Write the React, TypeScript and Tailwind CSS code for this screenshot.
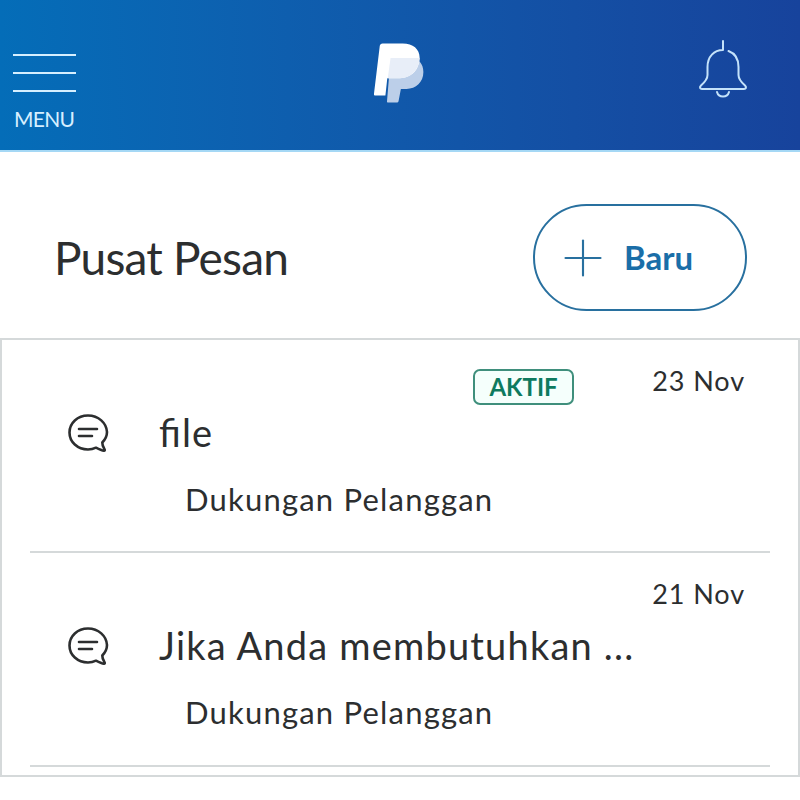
import { Plus } from 'lucide-react';

const sans = "font-['Lato','Noto_Sans',sans-serif]";

function ChatIcon() {
  return (
    <svg width="44" height="44" viewBox="0 0 44 44" fill="none" stroke="#2c2e2f" strokeWidth="2.6" strokeLinecap="round" strokeLinejoin="round">
      <path d="M22 3.5C11.5 3.5 3.5 11 3.500 20.5S11.5 37.5 22 37.5c3 0 5.500-.6 8-1.800 2.500 1.300 5.500 2.800 8 3.100.8 0 1-.7.6-1.300-1.300-2-2.400-4.500-2.300-7 2.900-3 4.700-6.500 4.700-10.500C40.500 11 32.500 3.500 22 3.500Z" />
      <path d="M13 17h18M13 24h13" />
    </svg>
  );
}

function PayPalLogo() {
  return (
    <svg width="52" height="60" viewBox="0 0 54 64">
      <path d="M18 16h20c10 0 15 6 15 15 0 11-8 18-18 18h-6l-2.500 13c-.2 1-1 1.500-2 1.500h-9c-1 0-1.500-.6-1.300-1.500Z" fill="#bccfe9" />
      <path d="M6.500 3c.3-1.500 1.200-2.500 3-2.500H31c11 0 18 6 18 15 0 13-9 22-21 22H14.500l-2 18.500H2c-1.200 0-1.900-.7-1.700-2Z" fill="#ffffff" />
      <path d="M18 16h31c0 .1 0 .2 0 .3C48 29 39.500 37.500 28 37.500h-13Z" fill="#e8eef8" />
    </svg>
  );
}

function BellIcon() {
  return (
    <svg width="50" height="58" viewBox="0 0 50 58" fill="none" stroke="#c4e2fa" strokeWidth="2" strokeLinecap="round" strokeLinejoin="round">
      <path d="M25 1v9c-9 0-15.500 6.500-15.500 17v8c0 4.500-2.500 7-6.500 10.500-1.800 1.700-1 3.500 1 3.500h42c2 0 2.800-1.800 1-3.500-4-3.500-6.500-6-6.500-10.500v-8c0-9-4.500-14-10-16" />
      <path d="M19 52c.8 3 3 4.500 6 4.500s5.200-1.500 6-4.500" />
    </svg>
  );
}

function MessageRow({ date, title, badge }: { date: string; title: string; badge?: boolean }) {
  return (
    <div className="h-[214px] first:h-[213px] mx-7 border-b-2 border-[#d5d9da] relative flex shrink-0">
      <div className="w-[129px] pl-[36px] pt-[72px] shrink-0">
        <ChatIcon />
      </div>
      <div className="flex flex-col">
        <div className="text-[38px] leading-[46px] mt-[69px] text-[#2c2e2f] tracking-[1.2px] whitespace-nowrap [font-feature-settings:'liga'_1]">{title}</div>
        <div className="text-[31px] leading-[38px] mt-[25px] ml-[26px] text-[#2c2e2f] tracking-[1.2px]">Dukungan Pelanggan</div>
      </div>
      <div className="absolute right-[25px] top-[25px] text-[27px] leading-[32px] text-[#2c2e2f] tracking-[0.9px]">{date}</div>
      {badge && (
        <div className="absolute left-[443px] top-[29px] w-[101px] h-[36px] rounded-[7px] border-2 border-[#3f8f7c] bg-[#f5fffc] flex items-center justify-center text-[24px] font-bold text-[#0e7a5f]">
          AKTIF
        </div>
      )}
    </div>
  );
}

export default function App() {
  return (
    <div className={`w-[800px] h-[800px] overflow-hidden bg-white flex flex-col ${sans}`}>
      <header className="h-[152px] shrink-0 bg-gradient-to-r from-[#046db8] to-[#17439c] border-b-2 border-[#a5d8f5] flex items-start justify-between relative pr-[52px]">
        <div className="pl-[13px] pt-[54px] w-[76px] box-content">
          <div className="flex flex-col gap-[16px] w-[63px]">
            <span className="h-[2px] bg-[#d6efff] block" />
            <span className="h-[2px] bg-[#d6efff] block" />
            <span className="h-[2px] bg-[#d6efff] block" />
          </div>
          <div className="text-[21px] leading-[26px] mt-[14px] ml-px text-[#d6efff] tracking-[-0.7px]">MENU</div>
        </div>
        <div className="absolute left-[373px] top-[43px]">
          <PayPalLogo />
        </div>
        <div className="pt-[40px]">
          <BellIcon />
        </div>
      </header>

      <div className="flex items-center justify-between h-[186px] shrink-0 pt-[25px] pl-[54px] pr-[53px]">
        <h1 className="text-[46px] font-normal text-[#2c2e2f] tracking-[-0.8px]">Pusat Pesan</h1>
        <button className="w-[214px] h-[107px] rounded-full border-2 border-[#28709f] flex items-center pl-[18px] gap-[11px] text-[#1a6ea8]">
          <Plus size={60} strokeWidth={0.85} className="text-[#28709f]" />
          <span className="text-[33px] font-bold">Baru</span>
        </button>
      </div>

      <div className="border-2 border-[#d5d9da] flex flex-col h-[439px] shrink-0">
        <MessageRow date="23 Nov" title="file" badge />
        <MessageRow date="21 Nov" title="Jika Anda membutuhkan ..." />
      </div>
    </div>
  );
}
